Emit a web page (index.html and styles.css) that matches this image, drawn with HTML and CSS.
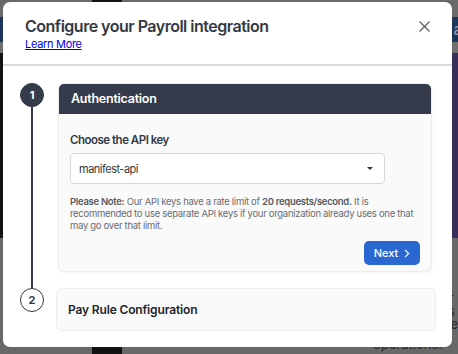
FILE: index.html
```html
<!DOCTYPE html>
<html lang="en">
<head>
    <meta charset="UTF-8">
    <title>Configure your Payroll integration</title>
    <link rel="stylesheet" href="styles.css">
</head>
<body>
    <!-- dimmed page behind the dialog -->
    <div class="page">
        <div class="band band-top"></div>
        <div class="band band-nav"><span class="nav-text">a</span></div>
        <div class="band band-sub"></div>
        <div class="band band-hero"></div>
        <div class="band band-content">
            <p class="page-copy">Manage your payroll faster<br>across teams and locations<br>and pay cycles with ease</p>
            <p class="page-text">operations.</p>
        </div>
    </div>

    <div class="overlay">
        <div class="modal">
            <div class="modal-header">
                <div class="modal-titles">
                    <h1 class="modal-title">Configure your Payroll integration</h1>
                    <a href="#" class="learn-link">Learn More</a>
                </div>
                <button class="close-btn" aria-label="Close">
                    <svg width="11" height="11" viewBox="0 0 11 11"><path d="M0.5 0.5L10.5 10.5M10.5 0.5L0.5 10.5" stroke="#5b5f66" stroke-width="1.3" fill="none"/></svg>
                </button>
            </div>

            <div class="modal-body">
                <div class="step step-first">
                    <div class="step-marker">
                        <div class="step-num step-num-active">1</div>
                        <div class="step-line"></div>
                    </div>
                    <div class="step-content">
                        <div class="card card-active">
                            <div class="card-head">Authentication</div>
                            <div class="card-body">
                                <label class="field-label">Choose the API key</label>
                                <div class="select">
                                    <span>manifest-api</span>
                                    <span class="caret"></span>
                                </div>
                                <p class="note"><b>Please Note:</b> Our API keys have a rate limit of <b>20 requests/second.</b> It is recommended to use separate API keys if your organization already uses one that may go over that limit.</p>
                                <div class="card-actions">
                                    <button class="btn-next">Next
                                        <svg width="6" height="9" viewBox="0 0 6 9"><path d="M1 0.8L4.7 4.5L1 8.2" stroke="#fff" stroke-width="1.2" fill="none"/></svg>
                                    </button>
                                </div>
                            </div>
                        </div>
                    </div>
                </div>

                <div class="step">
                    <div class="step-marker">
                        <div class="step-num">2</div>
                    </div>
                    <div class="step-content">
                        <div class="card card-closed">Pay Rule Configuration</div>
                    </div>
                </div>
            </div>
        </div>
    </div>
</body>
</html>
```

FILE: styles.css
```css
* {
    margin: 0;
    padding: 0;
    box-sizing: border-box;
}

body {
    width: 458px;
    height: 354px;
    overflow: hidden;
    font-family: 'Inter', 'Noto Sans', sans-serif;
    position: relative;
}

/* page behind the overlay (already dimmed) */
.page {
    display: flex;
    flex-direction: column;
    height: 354px;
    background: #686868;
}

.band {
    flex: none;
}

.band-top {
    height: 17px;
    background: linear-gradient(to right, #6a6a6a 92px, #121212 92px, #121212 122px, #6a6a6a 122px);
}

.band-nav {
    height: 25px;
    background: #1e355a;
    display: flex;
    justify-content: flex-end;
    align-items: center;
    overflow: hidden;
}

.nav-text {
    color: #8a93a6;
    font-size: 15px;
    font-weight: 600;
    margin-right: -4px;
}

.band-sub {
    height: 11px;
    background: #707070;
}

.band-hero {
    height: 185px;
    background: linear-gradient(to right, #121412 440px, #3a2e5a 440px);
}

.band-content {
    flex: 1;
    background: linear-gradient(to right, #686868 92px, #121212 92px, #121212 122px, #686868 122px);
    padding: 54px 0 0 373px;
    overflow: hidden;
}

.page-copy {
    color: #2a2a2a;
    font-size: 13px;
    line-height: 13px;
    white-space: nowrap;
}

.page-text {
    color: #2a2a2a;
    font-size: 13px;
    line-height: 13px;
    margin-top: 7px;
}

.overlay {
    position: absolute;
    inset: 0;
    padding: 2px 6px 7px 3px;
    display: flex;
}

.modal {
    flex: 1;
    background: #fff;
    border-radius: 7px;
    display: flex;
    flex-direction: column;
    overflow: hidden;
}

.modal-header {
    display: flex;
    justify-content: space-between;
    align-items: flex-start;
    padding: 13px 22px 12px 22px;
    border-bottom: 2px solid #d9d9de;
}

.modal-title {
    font-size: 16px;
    line-height: 22px;
    font-weight: 600;
    letter-spacing: -0.5px;
    color: #333843;
}

.learn-link {
    display: block;
    font-size: 11px;
    line-height: 15px;
    letter-spacing: -0.3px;
    color: #0000ee;
    text-decoration: underline;
}

.close-btn {
    border: none;
    background: none;
    margin-top: 6px;
    width: 11px;
    height: 11px;
    display: flex;
}

.modal-body {
    padding: 17px 16px 0 17px;
}

.step {
    display: flex;
    gap: 14px;
}

.step-marker {
    width: 24px;
    flex: none;
    display: flex;
    flex-direction: column;
    align-items: center;
}

.step-num {
    width: 24px;
    height: 24px;
    border-radius: 50%;
    border: 1.5px solid #333a48;
    color: #333a48;
    font-size: 11px;
    font-weight: 700;
    display: flex;
    align-items: center;
    justify-content: center;
    flex: none;
}

.step-num-active {
    background: #353b4a;
    color: #fff;
}

.step-line {
    flex: 1;
    width: 2px;
    background: #353b4a;
}

.step-content {
    flex: 1;
}

.step-first .step-content {
    padding: 0 4px 16px 0;
}

.card {
    background: #fafafa;
    border: 1px solid #ececec;
    border-radius: 6px;
}

.card-active {
    overflow: hidden;
    box-shadow: 0 1px 3px rgba(0, 0, 0, 0.05);
}

.card-head {
    background: #353b4a;
    color: #fff;
    font-size: 12.5px;
    font-weight: 600;
    letter-spacing: -0.25px;
    line-height: 16px;
    padding: 7px 12px;
}

.card-body {
    padding: 18px 11px 6px 11px;
}

.field-label {
    display: block;
    font-size: 11.5px;
    font-weight: 600;
    letter-spacing: -0.5px;
    color: #343a45;
    line-height: 16px;
}

.select {
    margin-top: 5px;
    width: 315px;
    height: 31px;
    background: #fff;
    border: 1px solid #d8d8d8;
    border-radius: 4px;
    display: flex;
    align-items: center;
    justify-content: space-between;
    padding: 0 11px 0 8px;
    font-size: 11px;
    letter-spacing: -0.5px;
    color: #333843;
}

.caret {
    width: 0;
    height: 0;
    border-left: 3px solid transparent;
    border-right: 3px solid transparent;
    border-top: 3.5px solid #333;
}

.note {
    margin: 12px -9px 0 0;
    font-size: 9.5px;
    line-height: 12px;
    letter-spacing: -0.3px;
    color: #6a6d73;
}

.note b {
    font-weight: 600;
    color: #555a62;
}

.card-actions {
    display: flex;
    justify-content: flex-end;
    margin-top: 9px;
}

.btn-next {
    border: none;
    background: #2b67d1;
    color: #fff;
    font-family: inherit;
    font-size: 11px;
    font-weight: 500;
    height: 24px;
    width: 56px;
    border-radius: 5px;
    display: flex;
    align-items: center;
    justify-content: center;
    gap: 6px;
}

.card-closed {
    margin-left: -2px;
    height: 43px;
    display: flex;
    align-items: center;
    padding: 0 11px;
    font-size: 12px;
    font-weight: 600;
    letter-spacing: -0.15px;
    color: #1f232b;
}
```
